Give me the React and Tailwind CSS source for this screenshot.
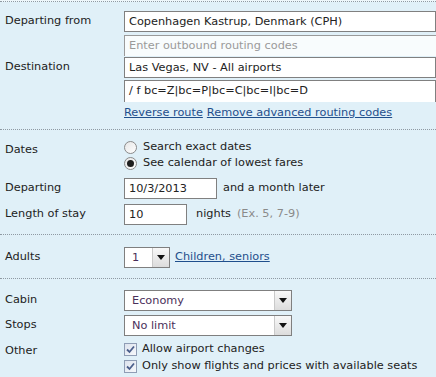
import React from 'react';

// Casilla de verificación marcada (estilo antiguo)
function Check() {
  return (
    <span className="w-[13px] h-[13px] border border-[#8f9db5] bg-gradient-to-br from-[#dde3ee] to-[#f6f8fb] flex items-center justify-center shrink-0">
      <svg width="9" height="9" viewBox="0 0 9 9">
        <path d="M1 4.5 L3.5 7 L8 1.5" stroke="#4b5f8c" strokeWidth="1.8" fill="none" />
      </svg>
    </span>
  );
}

function Radio({ checked }) {
  return (
    <span className="w-[13px] h-[13px] rounded-full border border-[#8a8a8a] bg-gradient-to-br from-[#e6e6e6] to-white flex items-center justify-center shrink-0">
      {checked && <span className="w-[7px] h-[7px] rounded-full bg-[#1e1e1e]" />}
    </span>
  );
}

function SelectBox({ value, width }) {
  return (
    <div className={`flex h-[21px] border border-[#7f7f7f] bg-white ${width}`}>
      <span className="flex-1 pl-[7px] leading-[19px] text-[#4a2f5a]">{value}</span>
      <span className="w-[17px] border-l border-[#c9c9c9] bg-gradient-to-b from-[#f8f8f8] to-[#dcdcdc] flex items-center justify-center">
        <svg width="8" height="5" viewBox="0 0 8 5"><path d="M0 0 H8 L4 5 Z" fill="#111" /></svg>
      </span>
    </div>
  );
}

export default function App() {
  const label = 'w-[124px] shrink-0 pl-[5px]';
  const input = 'h-[21px] border border-[#808080] bg-white px-[4px] leading-[19px]';
  const link = 'text-[#1f4f8c] underline';

  return (
    <div className="w-[436px] h-[377px] overflow-hidden bg-[#e0f0f8] text-[#222] text-[11.3px]" style={{ fontFamily: '"DejaVu Sans", Verdana, sans-serif' }}>
      <div className="h-[2px] bg-[#eef7fb] border-b border-dotted border-[#8f9aa3]" />

      {/* ORIGEN Y DESTINO */}
      <div className="pt-[9px] pb-[8px] border-b border-dotted border-[#8f9aa3]">
        <div className="flex items-center">
          <span className={label}>Departing from</span>
          <div className={`${input} w-[330px]`}>Copenhagen Kastrup, Denmark (CPH)</div>
        </div>
        <div className="flex mt-[3px]">
          <span className={label} />
          <div className="h-[21px] w-[330px] border-t border-l border-[#9a9a9a] bg-[#f8fcfd] px-[4px] leading-[20px] text-[#9a9a9a]">Enter outbound routing codes</div>
        </div>
        <div className="flex items-center mt-[1px]">
          <span className={label}>Destination</span>
          <div className={`${input} w-[330px]`}>Las Vegas, NV - All airports</div>
        </div>
        <div className="flex mt-[2px]">
          <span className={label} />
          <div className={`${input} w-[330px] border-b-0 bg-[#f8fcfd] h-[22px]`}>/ f bc=Z|bc=P|bc=C|bc=I|bc=D</div>
        </div>
        <div className="flex mt-[3px] leading-[16px]">
          <span className={label} />
          <a className={link}>Reverse route</a>
          <a className={`${link} ml-[4px]`}>Remove advanced routing codes</a>
        </div>
      </div>

      {/* FECHAS */}
      <div className="pt-[11px] pb-[9px] border-b border-dotted border-[#8f9aa3]">
        <div className="flex">
          <span className={`${label} pt-[1px]`}>Dates</span>
          <div className="flex flex-col gap-[3px]">
            <div className="flex items-center gap-[6px] h-[13px]"><Radio /><span>Search exact dates</span></div>
            <div className="flex items-center gap-[6px] h-[13px]"><Radio checked /><span>See calendar of lowest fares</span></div>
          </div>
        </div>
        <div className="flex items-center mt-[8px]">
          <span className={label}>Departing</span>
          <div className={`${input} w-[93px] h-[20px] leading-[18px]`}>10/3/2013</div>
          <span className="ml-[6px]">and a month later</span>
        </div>
        <div className="flex items-center mt-[5px]">
          <span className={label}>Length of stay</span>
          <div className={`${input} w-[63px] h-[19px] leading-[18px]`}>10</div>
          <span className="ml-[9px]">nights</span>
          <span className="ml-[6px] text-[#8a8a8a]">(Ex. 5, 7-9)</span>
        </div>
      </div>

      {/* PASAJEROS */}
      <div className="pt-[12px] pb-[10px] border-b border-dotted border-[#8f9aa3]">
        <div className="flex items-center">
          <span className={label}>Adults</span>
          <SelectBox value="1" width="w-[46px]" />
          <a className={`${link} ml-[5px]`}>Children, seniors</a>
        </div>
      </div>

      {/* CABINA Y OTROS */}
      <div className="pt-[11px]">
        <div className="flex items-center">
          <span className={label}>Cabin</span>
          <SelectBox value="Economy" width="w-[168px]" />
        </div>
        <div className="flex items-center mt-[4px]">
          <span className={label}>Stops</span>
          <SelectBox value="No limit" width="w-[168px]" />
        </div>
        <div className="flex mt-[7px]">
          <span className={label}>Other</span>
          <div className="flex flex-col gap-[4px]">
            <div className="flex items-center gap-[5px] h-[13px]"><Check /><span>Allow airport changes</span></div>
            <div className="flex items-center gap-[5px] h-[13px]"><Check /><span>Only show flights and prices with available seats</span></div>
          </div>
        </div>
      </div>
    </div>
  );
}
